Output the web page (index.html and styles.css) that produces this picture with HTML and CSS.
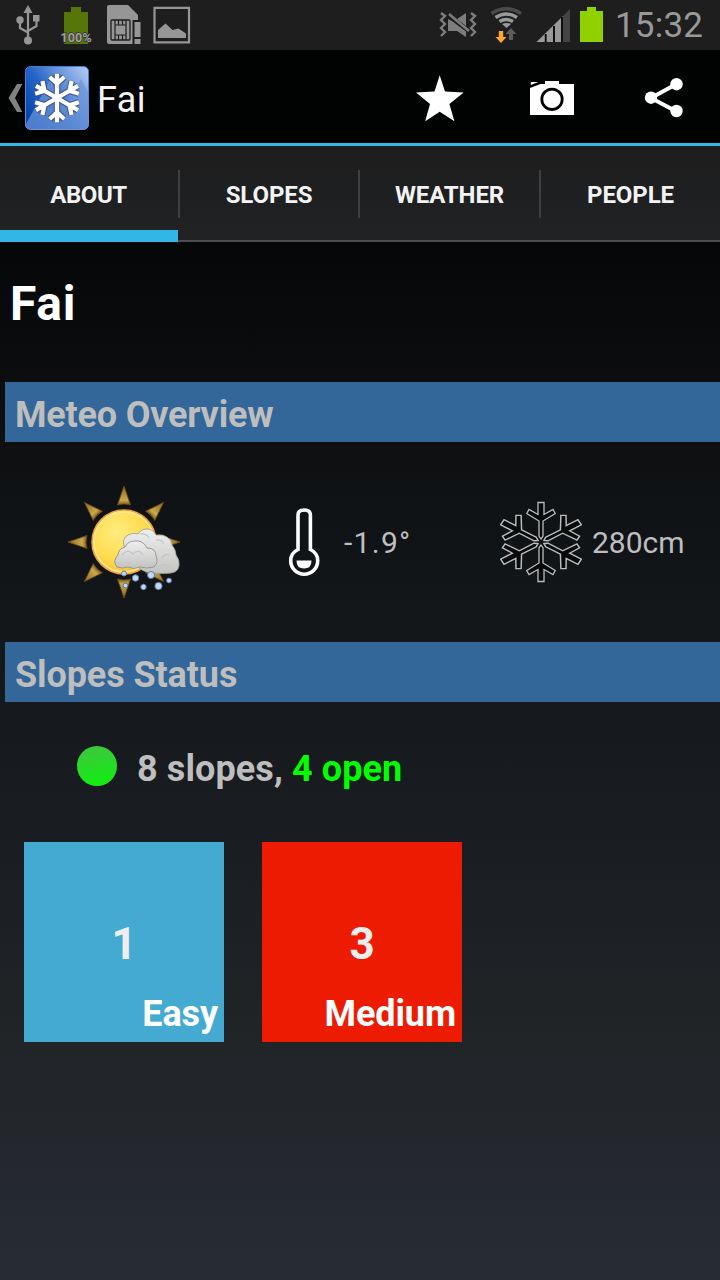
FILE: index.html
```html
<!DOCTYPE html>
<html lang="en">
<head>
<meta charset="utf-8">
<title>Fai</title>
<link rel="stylesheet" href="styles.css">
</head>
<body>
<div class="screen">
  <div class="statusbar">
    <div class="notifications">
      <svg class="i-usb" width="24" height="50" viewBox="16 0 24 50"><g fill="#969696"><path d="M28 5l4.500 8h-9z"/><circle cx="20" cy="20" r="3.700"/><path d="M33 15h6.500v6.500H33z"/><circle cx="28" cy="40.500" r="4"/></g><path d="M28 11v28M20 21v7l8 4.500M36.500 20v6l-8.500 5" fill="none" stroke="#969696" stroke-width="2.200"/></svg>
      <svg class="i-charge" width="34" height="50" viewBox="59 0 34 50"><path d="M64 12h7V7h10v5h7v32H64z" fill="#56760a"/><text class="charge-text" x="76" y="41.500" text-anchor="middle" textLength="31" lengthAdjust="spacingAndGlyphs">100%</text></svg>
      <svg class="i-sim" width="36" height="50" viewBox="106 0 36 50"><path d="M109 5h19l10 10v29h-29q-2 0-2-2V7q0-2 2-2z" fill="#969696"/><rect x="111" y="20" width="19" height="20" rx="1" fill="#969696" stroke="#1e1e1e" stroke-width="1.300"/><path d="M115 20v5h11v-5M118.500 20v5M122.500 20v5M115 40v-5h11v5M118.500 40v-5M122.500 40v-5M115 25v10M126 25v10" fill="none" stroke="#1e1e1e" stroke-width="1.200"/><path d="M132.500 20h9v25h-9z" fill="#1e1e1e"/><path d="M134.500 22h6v15h-6zM134.500 39h6v5h-6z" fill="#969696"/></svg>
      <svg class="i-pic" width="38" height="50" viewBox="153 0 38 50"><path d="M154.500 7.800h34.500v34.500h-34.500z" fill="none" stroke="#969696" stroke-width="2.200"/><path d="M158 38v-8l7.500-6.500 7 6.500 6-1.500 7.500 5V38z" fill="#969696"/></svg>
    </div>
    <div class="system">
      <svg class="i-vib" width="40" height="50" viewBox="438 0 40 50"><path d="M448 19l4 2 14 10.500V37l-9-6h-9zM457 19l9-6v13z" fill="#7d7d7d"/><path d="M449 14l20 17" stroke="#7d7d7d" stroke-width="2.600"/><path d="M441 13l4 3-4 4 4 4-4 4 4 4-4 4M471 13l4 3-4 4 4 4-4 4 4 4-4 4" fill="none" stroke="#7d7d7d" stroke-width="2.400"/></svg>
      <svg class="i-wifi" width="34" height="50" viewBox="490 0 34 50"><g fill="none" stroke-width="3.400"><path d="M491.500 13.500q14.700-9.500 29.500 0" stroke="#4b4b4b"/><path d="M495.500 17.500q10.700-7 21.500 0M499.500 21.500q6.700-4 13.500 0" stroke="#999"/></g><path d="M502 24q4.500-2 9 0l-4.500 4z" fill="#999"/><path d="M498.800 31h4.400v6h3.300l-5.500 6-5.500-6h3.300z" fill="#ffa52e"/><path d="M511 28l5.500 6H513v6h-4v-6h-3.500z" fill="#5c5c5c"/></svg>
      <svg class="i-signal" width="34" height="50" viewBox="536 0 34 50"><path d="M536.500 42L563 16v26z" fill="#999"/><path d="M563 16l7-7v33h-7z" fill="#444"/><path d="M545.700 34v8M554 26v16M562 17v25" stroke="#000" stroke-width="1.800"/></svg>
      <svg class="i-batt" width="24" height="50" viewBox="580 0 24 50"><path d="M580 11h7V7h9v4h7v31h-23z" fill="#92d100"/></svg>
      <span class="clock">15:32</span>
    </div>
  </div>

  <header class="actionbar">
    <svg class="up" width="17" height="93" viewBox="8 50 17 93"><path d="M17 84h5.300l-7.300 14 7.300 14H17L8.500 98z" fill="#828282"/></svg>
    <svg class="logo" width="64" height="64" viewBox="25 66 64 64">
      <defs>
        <linearGradient id="sky" x1="0" y1=".7" x2="1" y2="0"><stop offset="0" stop-color="#0648ad"/><stop offset=".35" stop-color="#2464c6"/><stop offset="1" stop-color="#bad0f5"/></linearGradient>
        <linearGradient id="edge" x1="0" y1="0" x2="0" y2="1"><stop offset="0" stop-color="#3b7bdd"/><stop offset="1" stop-color="#7397d3"/></linearGradient>
        <path id="flake" d="M0 0V-24.300M-7.300-21L0-14.500L7.300-21"/>
        <g id="flake6"><use href="#flake"/><use href="#flake" transform="rotate(60)"/><use href="#flake" transform="rotate(120)"/><use href="#flake" transform="rotate(180)"/><use href="#flake" transform="rotate(240)"/><use href="#flake" transform="rotate(300)"/></g>
      </defs>
      <rect x="25.500" y="66.500" width="63" height="63" rx="5" fill="url(#sky)" stroke="url(#edge)"/>
      <path d="M26 124l24-44 15 26 16-27 7 13v33q0 4-4 4H30q-4 0-4-4z" fill="#6c94d8" opacity=".72"/>
      <g fill="none" transform="translate(57 98)"><use href="#flake6" stroke="#344765" stroke-width="6.400" opacity=".75"/><use href="#flake6" stroke="#fff" stroke-width="4.300"/></g>
    </svg>
    <span class="bar-title">Fai</span>
    <div class="actions">
      <svg width="48" height="48" viewBox="416 75 48 48"><path d="M439.700 75.300l5.300 16.200 18.700 1-14.300 11.500 5 17.200-14.700-9.400-14.500 9.400 4.800-17.200L416 92.500l18.500-1z" fill="#fff"/></svg>
      <svg width="44" height="48" viewBox="530 75 44 48"><path d="M530 88l10.500-4h4.500v-3h14v3h15v31h-44zM530.800 82h7.500l-7.500 3z" fill="#fff"/><circle cx="552" cy="99.300" r="10.200" fill="#fff" stroke="#000" stroke-width="2.800"/></svg>
      <svg width="40" height="48" viewBox="644 75 40 48"><path d="M676.500 84l-25.500 14 25.500 13.500" fill="none" stroke="#fff" stroke-width="4"/><g fill="#fff"><circle cx="676.500" cy="84.200" r="6.200"/><circle cx="651" cy="97.700" r="6.200"/><circle cx="676.500" cy="111" r="6.200"/></g></svg>
    </div>
  </header>

  <nav class="tabs">
    <a class="tab active"><span>ABOUT</span></a>
    <a class="tab"><span>SLOPES</span></a>
    <a class="tab"><span>WEATHER</span></a>
    <a class="tab"><span>PEOPLE</span></a>
  </nav>

  <main class="content">
    <h1 class="resort">Fai</h1>
    <h2 class="section meteo-title">Meteo Overview</h2>
    <div class="meteo">
      <svg class="weather" width="114" height="116" viewBox="67 484 114 116">
        <defs>
          <radialGradient id="sun" cx=".4" cy=".35" r=".65"><stop offset="0" stop-color="#ffec80"/><stop offset=".65" stop-color="#ffdc4e"/><stop offset="1" stop-color="#f8c03c"/></radialGradient>
          <linearGradient id="cloud" x1="0" y1="0" x2="0" y2="1"><stop offset="0" stop-color="#f0f0f0"/><stop offset="1" stop-color="#c2c2c1"/></linearGradient>
          <linearGradient id="rayfill" x1="0" y1="0" x2="0" y2="1"><stop offset="0" stop-color="#8f6620"/><stop offset=".75" stop-color="#c7a94d"/><stop offset="1" stop-color="#7d5418"/></linearGradient>
          <path id="ray" d="M0-56L6.500-37Q0-39-6.500-37Z" fill="url(#rayfill)" stroke="#704a1b" stroke-width=".8"/>
        </defs>
        <g transform="translate(124 542)"><use href="#ray"/><use href="#ray" transform="rotate(45)"/><use href="#ray" transform="rotate(90)"/><use href="#ray" transform="rotate(135)"/><use href="#ray" transform="rotate(180)"/><use href="#ray" transform="rotate(225)"/><use href="#ray" transform="rotate(270)"/><use href="#ray" transform="rotate(315)"/></g>
        <circle cx="124" cy="542" r="32" fill="url(#sun)" stroke="#f2a43a" stroke-width="1.500"/>
        <circle cx="124" cy="542" r="30" fill="none" stroke="#ffe695" stroke-width="1.800"/>
        <path d="M124 546q-2-8 4-11 5-3 10-1 3-5 9-5 6 0 9 6 7-1 11 2 5 3 5 8 4 5 4 10 4 5 3 11-1 6-8 7-8 1-17 0-9 0-15-5z" fill="url(#cloud)" stroke="#9a9a97" stroke-width=".8"/>
        <path d="M117 567q-5-6 1-12 0-6 7-8 3-6 10-6 8-1 12 7 9 0 9 8 3 6-2 11-8 2-14 0-6 3-12 0-6 2-11 0z" fill="url(#cloud)" stroke="#92928f" stroke-width=".9"/>
        <path d="M122 555q6-7 11-1 6-6 10 1M140 534q7-1 9 4M156 540q5-1 8 4M162 558q3-5 7-3M158 567q7-5 12 1" fill="none" stroke="#c4c4c3" stroke-width="1.200"/>
        <g fill="#c2d9f5" stroke="#5d7fac" stroke-width="1"><circle cx="124" cy="573.500" r="2.500"/><circle cx="135.500" cy="578" r="3.200"/><circle cx="151" cy="575" r="3.500"/><circle cx="125.500" cy="585.500" r="2.300"/><circle cx="143.500" cy="587" r="2.700"/><circle cx="158.500" cy="586" r="3.600"/><circle cx="169" cy="580.500" r="2.400"/></g>
      </svg>
      <svg class="thermo" width="32" height="70" viewBox="288 507 32 70"><path d="M298 549.500V515q0-5 6.200-5t6.200 5v34.500q7.300 3.500 7.300 11.200a13.500 13.500 0 0 1-27 0q0-7.700 7.300-11.200z" fill="none" stroke="#fff" stroke-width="3.600"/><path d="M296.500 560.500h15q0 8-7.500 8t-7.500-8z" fill="#fff"/></svg>
      <span class="temp">-1.9°</span>
      <svg class="snow" width="82" height="82" viewBox="-41 -41 82 82">
        <defs><path id="arm" d="M0-3L-2-6V-21L-14.200-28.500L-12-32.500L-3-27.500V-39.500H3V-27.500L12-32.500L14.200-28.500L2-21V-6Z"/></defs>
        <g fill="#08090a" stroke="#bcbcbc" stroke-width="1.300"><use href="#arm"/><use href="#arm" transform="rotate(180)"/><g transform="scale(1.130 1)"><use href="#arm" transform="rotate(60)"/><use href="#arm" transform="rotate(120)"/><use href="#arm" transform="rotate(240)"/><use href="#arm" transform="rotate(300)"/></g></g>
      </svg>
      <span class="depth">280cm</span>
    </div>
    <h2 class="section slopes-title">Slopes Status</h2>
    <div class="summary"><i class="dot"></i><span class="count">8 slopes, <em class="open">4 open</em></span></div>
    <div class="tiles">
      <div class="tile easy"><span class="num">1</span><span class="label">Easy</span></div>
      <div class="tile medium"><span class="num">3</span><span class="label">Medium</span></div>
    </div>
  </main>
</div>
</body>
</html>
```
FILE: styles.css
```css
* { box-sizing: border-box; }
body { margin: 0; font-family: Roboto, "Liberation Sans", sans-serif; }
svg { display: block; flex: none; }
.screen { width: 720px; height: 1280px; overflow: hidden; background: linear-gradient(#000, #060709 250px, #0e1012 450px, #13171a 620px, #1a1d21 850px, #212528 1050px, #272b34); }

.statusbar { height: 50px; display: flex; justify-content: space-between; background: #1e1e1e; }
.notifications { display: flex; padding-left: 16px; }
.i-charge { margin-left: 19px; }
.i-sim { margin-left: 13px; }
.i-pic { margin-left: 11px; }
.charge-text { font: bold 13px Roboto, sans-serif; fill: #a0a0a0; stroke: #333; stroke-width: 1.5px; paint-order: stroke; }
.system { display: flex; width: 282px; }
.i-wifi { margin-left: 12px; }
.i-signal { margin-left: 12px; }
.i-batt { margin-left: 10px; }
.clock { margin-left: 11px; font-size: 35px; line-height: 51px; letter-spacing: 0.2px; color: #999; }

.actionbar { height: 96px; padding-left: 8px; display: flex; align-items: center; background: #010202; border-bottom: 3px solid #33b5e5; }
.logo { margin-top: 2px; }
.bar-title { margin-left: 8px; padding-top: 7px; font-size: 36px; letter-spacing: 0.4px; color: #f3f3f3; }
.actions { flex: 1; display: flex; justify-content: flex-end; padding: 4px 36px 0 0; }
.actions svg + svg { margin-left: 66px; }
.actions svg:last-child { margin-left: 70px; }

.tabs { height: 96px; display: grid; grid-template-columns: 180px 180px 181px 179px; background: linear-gradient(#4d4d4d, #4d4d4d) 0 100% / 100% 2px no-repeat, linear-gradient(#1d1d1d, #202224); }
.tab { display: flex; align-items: center; font-weight: 700; font-size: 24px; color: #f3f3f3; }
.tab span { flex: 1; height: 48px; line-height: 50px; text-align: center; letter-spacing: -0.1px; border-right: 2px solid #404040; }
.tab:last-child span { border-right: 0; }
.tab.active { background: linear-gradient(#33b5e5, #33b5e5) 0 100% / 178px 12px no-repeat; }
.tab.active span { padding-right: 1px; letter-spacing: -0.4px; }

.content { padding-left: 5px; }
.resort { margin: 0; height: 140px; padding: 33px 0 0 5px; font-size: 48px; line-height: 58px; letter-spacing: 0.7px; color: #fff; }
.section { margin: 0; height: 60px; padding-left: 10px; font-size: 36px; line-height: 67px; color: #bebebe; background: #336699; }
.meteo-title { letter-spacing: -0.2px; }
.slopes-title { letter-spacing: -0.1px; }
.meteo { height: 200px; display: flex; align-items: center; font-size: 30px; color: #bebebe; }
.weather { margin-left: 62px; }
.thermo { margin-left: 107px; }
.temp { margin-left: 24px; width: 66px; letter-spacing: 1.3px; white-space: nowrap; }
.snow { margin-left: 90px; }
.depth { margin-left: 10px; }
.summary { height: 140px; padding: 44px 0 0 72px; display: flex; align-items: flex-start; }
.dot { width: 40px; height: 40px; border-radius: 50%; background: linear-gradient(170deg, #3cc83c 10%, #12ed12 90%); }
.count { margin-left: 20px; font-size: 36px; line-height: 46px; font-weight: 700; letter-spacing: 0.1px; color: #bebebe; }
.open { font-style: normal; color: #0f0; }
.tiles { display: flex; gap: 38px; padding-left: 19px; }
.tile { width: 200px; height: 200px; padding: 75px 6px 0; display: flex; flex-direction: column; font-weight: 700; }
.easy { background: #44aad1; }
.medium { background: #ed1b02; }
.num { height: 71px; font-size: 44px; line-height: 54px; text-align: center; color: #eee; }
.label { font-size: 36px; line-height: 52px; text-align: right; letter-spacing: -0.1px; color: #fff; }
```
